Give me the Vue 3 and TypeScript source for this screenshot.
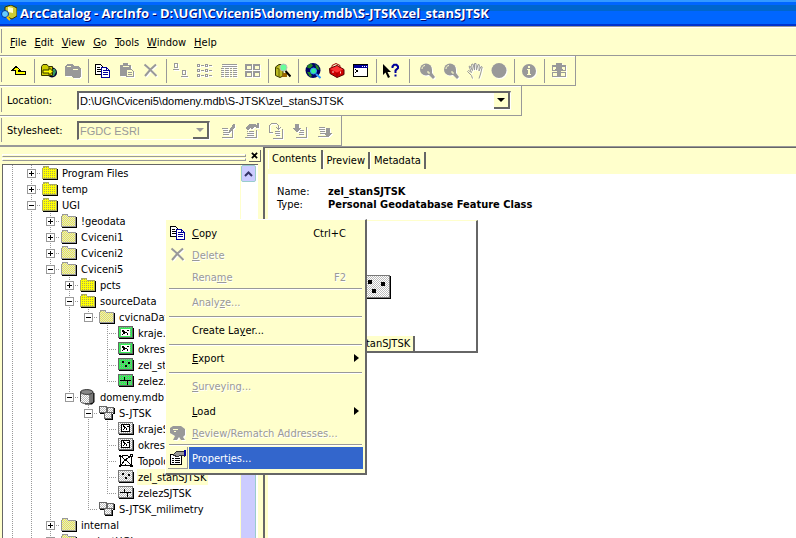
<script setup lang="ts">
import { ref } from 'vue'

interface Tool { icon: string; label: string; off?: boolean }
interface TreeRow {
  lines: boolean[]
  join: 'plus' | 'minus' | 'leaf'
  last?: boolean
  icon: string
  text: string
  selected?: boolean
}
interface MenuRow {
  icon?: string
  parts: [string, string, string]
  keys?: string
  off?: boolean
  sub?: boolean
  active?: boolean
  room?: boolean
  rule?: boolean
}

const menus: [string, string][] = [
  ['F', 'ile'], ['E', 'dit'], ['V', 'iew'], ['G', 'o'], ['T', 'ools'], ['W', 'indow'], ['H', 'elp'],
]

const mainTools: Tool[][] = [
  [{ icon: 'up', label: 'Up one level' }],
  [{ icon: 'connect', label: 'Connect to folder' }, { icon: 'disconnect', label: 'Disconnect folder', off: true }],
  [
    { icon: 'copy', label: 'Copy' },
    { icon: 'paste', label: 'Paste', off: true },
    { icon: 'cross', label: 'Delete', off: true },
  ],
  [
    { icon: 'large', label: 'Large icons', off: true },
    { icon: 'list', label: 'List', off: true },
    { icon: 'details', label: 'Details', off: true },
    { icon: 'thumbs', label: 'Thumbnails', off: true },
  ],
  [{ icon: 'search', label: 'Search' }],
  [
    { icon: 'globe', label: 'Launch ArcMap' },
    { icon: 'toolbox', label: 'ArcToolbox' },
    { icon: 'console', label: 'Command line' },
  ],
  [{ icon: 'help', label: "What's this?" }],
]

const geoTools: Tool[][] = [
  [
    { icon: 'zoom', label: 'Zoom in', off: true },
    { icon: 'zoom', label: 'Zoom out', off: true },
    { icon: 'hand', label: 'Pan', off: true },
    { icon: 'disc', label: 'Full extent', off: true },
  ],
  [{ icon: 'info', label: 'Identify', off: true }],
  [{ icon: 'thumbnail', label: 'Create thumbnail', off: true }],
]

const metaTools: Tool[] = [
  { icon: 'edit', label: 'Edit metadata', off: true },
  { icon: 'props', label: 'Metadata properties', off: true },
  { icon: 'refresh', label: 'Create metadata', off: true },
  { icon: 'import', label: 'Import metadata', off: true },
  { icon: 'export', label: 'Export metadata', off: true },
]

const y = true
const n = false
const rows: TreeRow[] = [
  { lines: [y], join: 'plus', icon: 'folder', text: 'Program Files' },
  { lines: [y], join: 'plus', icon: 'folder', text: 'temp' },
  { lines: [y], join: 'minus', icon: 'folder', text: 'UGI' },
  { lines: [y, y], join: 'plus', icon: 'folder-pale', text: '!geodata' },
  { lines: [y, y], join: 'plus', icon: 'folder-pale', text: 'Cviceni1' },
  { lines: [y, y], join: 'plus', icon: 'folder-pale', text: 'Cviceni2' },
  { lines: [y, y], join: 'minus', icon: 'folder-pale', text: 'Cviceni5' },
  { lines: [y, y, y], join: 'plus', icon: 'folder', text: 'pcts' },
  { lines: [y, y, y], join: 'minus', icon: 'folder', text: 'sourceData' },
  { lines: [y, y, y, y], join: 'minus', last: true, icon: 'folder-pale', text: 'cvicnaData' },
  { lines: [y, y, y, y, n], join: 'leaf', icon: 'poly-green', text: 'kraje.shp' },
  { lines: [y, y, y, y, n], join: 'leaf', icon: 'poly-green', text: 'okresy.shp' },
  { lines: [y, y, y, y, n], join: 'leaf', icon: 'point-green', text: 'zel_st.shp' },
  { lines: [y, y, y, y, n], join: 'leaf', last: true, icon: 'line-green', text: 'zelez.shp' },
  { lines: [y, y, y], join: 'minus', last: true, icon: 'database', text: 'domeny.mdb' },
  { lines: [y, y, y, n], join: 'minus', icon: 'dataset', text: 'S-JTSK' },
  { lines: [y, y, y, n, y], join: 'leaf', icon: 'poly-gray', text: 'krajeSJTSK' },
  { lines: [y, y, y, n, y], join: 'leaf', icon: 'poly-gray', text: 'okresSJTSK' },
  { lines: [y, y, y, n, y], join: 'leaf', icon: 'topology', text: 'Topology' },
  { lines: [y, y, y, n, y], join: 'leaf', icon: 'point-gray', text: 'zel_stanSJTSK', selected: true },
  { lines: [y, y, y, n, y], join: 'leaf', last: true, icon: 'line-gray', text: 'zelezSJTSK' },
  { lines: [y, y, y, n], join: 'leaf', last: true, icon: 'dataset', text: 'S-JTSK_milimetry' },
  { lines: [y, y], join: 'plus', icon: 'folder-pale', text: 'internal' },
  { lines: [y, y], join: 'plus', icon: 'folder-pale', text: 'projectUGI' },
]

const context: MenuRow[] = [
  { icon: 'copy', parts: ['', 'C', 'opy'], keys: 'Ctrl+C' },
  { icon: 'cross', parts: ['', 'D', 'elete'], off: true },
  { parts: ['Rena', 'm', 'e'], keys: 'F2', off: true, rule: true },
  { parts: ['Analy', 'z', 'e...'], off: true, room: true, rule: true },
  { parts: ['Create La', 'y', 'er...'], room: true, rule: true },
  { parts: ['', 'E', 'xport'], sub: true, room: true, rule: true },
  { parts: ['', 'S', 'urveying...'], off: true, room: true },
  { parts: ['', 'L', 'oad'], sub: true },
  { icon: 'mailbox', parts: ['', 'R', 'eview/Rematch Addresses...'], off: true, rule: true },
  { icon: 'sheet', parts: ['Propert', 'i', 'es...'], active: true },
]

const location = ref('D:\\UGI\\Cviceni5\\domeny.mdb\\S-JTSK\\zel_stanSJTSK')
const tabs = ['Contents', 'Preview', 'Metadata']
const tab = ref('Contents')
</script>

<template>
  <div class="app">
    <svg class="defs" aria-hidden="true">
      <defs>
        <pattern id="d-yellow" width="2" height="2" patternUnits="userSpaceOnUse"><rect width="2" height="2" fill="#ff0" /><rect width="1" height="1" fill="#aa5" /></pattern>
        <pattern id="d-pale" width="2" height="2" patternUnits="userSpaceOnUse"><rect width="2" height="2" fill="#ddd" /><path d="M0 0h1v1h-1zM1 1h1v1h-1z" fill="#ee4" /></pattern>
        <pattern id="d-green" width="2" height="2" patternUnits="userSpaceOnUse"><rect width="2" height="2" fill="#3e5" /><rect width="1" height="1" fill="#999" /></pattern>
        <pattern id="d-gray" width="2" height="2" patternUnits="userSpaceOnUse"><rect width="2" height="2" fill="#fff" /><path d="M0 0h1v1h-1zM1 1h1v1h-1z" fill="#bbb" /></pattern>

        <symbol id="i-up" viewBox="0 0 16 16"><path d="M5 3.500L1.500 7H4v4.500h10.500v-3H7.500V7H9z" fill="#ff0" stroke="#000" /></symbol>
        <symbol id="i-connect" viewBox="0 0 16 16" shape-rendering="auto">
          <circle cx="11" cy="9.500" r="5" fill="#003" /><path d="M10 6h4l1 3-2 4h-3l2-3z" fill="#396" />
          <path d="M.5 12.500v-9l1.500-2h4l1.500 2h4v9z" fill="#cc0" stroke="#330" /><path d="M2 7h6V4.500L12 8.500 8 12.500V10H2z" fill="#ff0" stroke="#330" />
        </symbol>
        <symbol id="i-disconnect" viewBox="0 0 16 16"><path d="M0 3l2-2h5l2 2h4l3 3v7l-2 2H8l-2-2H0z" fill="#999" /><path d="M2 3.500h4M8 6.500h5" stroke="#ffc" /></symbol>
        <symbol id="i-copy" viewBox="0 0 16 16">
          <path d="M.5 1.500h5l3 3v7h-8z" fill="#fff" stroke="#000" /><path d="M2 4.500h3M2 6.500h4M2 8.500h4" stroke="#000" />
          <path d="M6.500 4.500h5l3 3v7h-8z" fill="#fff" stroke="#009" /><path d="M8 7.500h3M8 9.500h5M8 11.500h5M11.500 5v2.500h3" stroke="#009" fill="none" />
        </symbol>
        <symbol id="i-paste" viewBox="0 0 16 16"><path d="M1 2h3V0h5v2h3v4H7v7H1z" fill="#999" /><path d="M3.500 3.500h6" stroke="#ffc" /><path d="M7.500 6.500h5l2 2v5h-7z" fill="#ffc" stroke="#999" /><path d="M9 9.500h4M9 11.500h4" stroke="#999" /></symbol>
        <symbol id="i-cross" viewBox="0 0 16 16" shape-rendering="auto"><path d="M1.500 1.500l4 3.500 8 8M13 1.500L7.500 6.500 2 13" stroke="#999" stroke-width="2" fill="none" /></symbol>
        <symbol id="i-large" viewBox="0 0 16 16"><path d="M1.500.500h3v4h-3zM9.500 7.500h3v4h-3zM0 6.500h6M8 13.500h7" stroke="#999" fill="none" /></symbol>
        <symbol id="i-list" viewBox="0 0 16 16"><path d="M.5 1.500h2v2h-2zM8.500 1.500h2v2h-2zM.5 6.500h2v2h-2zM8.500 6.500h2v2h-2zM.5 11.500h2v2h-2zM8.500 11.500h2v2h-2zM4 2.500h3M12 2.500h3M4 7.500h3M12 7.500h3M4 12.500h3M12 12.500h3" stroke="#999" fill="none" /></symbol>
        <symbol id="i-details" viewBox="0 0 16 16"><path d="M1 1.500h15M1 3.500h15" stroke="#999" /><path d="M0 5.500h3m1 0h4m1 0h2m1 0h4M0 7.500h3m1 0h4m1 0h2m1 0h4M0 9.500h3m1 0h4m1 0h2m1 0h4M0 11.500h3m1 0h4m1 0h2m1 0h4M0 13.500h3m1 0h4m1 0h2m1 0h4" stroke="#999" /></symbol>
        <symbol id="i-thumbs" viewBox="0 0 16 16"><path d="M0 1h7v6H0zM8 1h7v6H8zM0 8h7v6H0zM8 8h7v6H8z" fill="#999" /><path d="M2 3h4v3H2zM10 3h4v3h-4zM2 10h4v3H2zM10 10h4v3h-4z" fill="#ffc" /></symbol>
        <symbol id="i-search" viewBox="0 0 16 16" shape-rendering="auto">
          <path d="M.5 4L4 1.500h4V13l-3 1.500L.5 12.500z" fill="#bb2" stroke="#330" /><path d="M.5 4.500L4 6v8" stroke="#660" fill="none" /><path d="M8 10h4v4H7z" fill="#960" />
          <circle cx="8.500" cy="4.500" r="3.500" fill="#6f9" stroke="#bbb" /><path d="M10.500 8l5 5.500" stroke="#000" stroke-width="2" />
        </symbol>
        <symbol id="i-globe" viewBox="0 0 16 16" shape-rendering="auto">
          <circle cx="8" cy="7.500" r="7.500" fill="#006" /><path d="M3 2l3-1.500 2 2-3 3-3-1zM10 1l3 2 1.500 4-3-1zM2 9h3l2 4-2 1z" fill="#282" />
          <circle cx="8.500" cy="8" r="3" fill="#3e9" stroke="#39f" /><path d="M11 11l4.500 4" stroke="#39f" stroke-width="2" />
        </symbol>
        <symbol id="i-toolbox" viewBox="0 0 16 16" shape-rendering="auto"><path d="M.5 5.500L8 2.500l7 4v5L8 14.500l-7-4z" fill="#c00" stroke="#500" /><path d="M1 6l7-3 6 3.500-6 3z" fill="#f33" /><path d="M8 10v4M3 5V2.500L7 .5l4 2V5" fill="none" stroke="#900" /><path d="M4 8v2M11.500 8.500v2" stroke="#fcc" /></symbol>
        <symbol id="i-console" viewBox="0 0 16 16"><path d="M.5 1.500h14v12H.5z" fill="#fff" stroke="#000" /><path d="M1 2h14v3H1z" fill="#009" /><path d="M9 3h1v1H9zM11 3h1v1h-1zM13 3h1v1h-1z" fill="#fff" /><path d="M2.500 6.500l2 1.500-2 1.500" stroke="#000" fill="none" /></symbol>
        <symbol id="i-help" viewBox="0 0 16 16" shape-rendering="auto"><path d="M0 1v11l2.500-2.500L5 15l2-1-2.500-5H8z" fill="#000" /><path d="M9.500 5V3.500L11 1.800h2.500L15 3.500V5l-2.500 2.500V10M12.500 11.500v2" stroke="#009" stroke-width="2" fill="none" /></symbol>
        <symbol id="i-zoom" viewBox="0 0 16 16" shape-rendering="auto"><circle cx="7" cy="6.500" r="6" fill="#999" /><path d="M9 7h4v3l3 4-2 2-4-4H8z" fill="#999" /><path d="M3 6c0-2 1-3 3-3.500M9 8v2h2" stroke="#ffc" fill="none" /></symbol>
        <symbol id="i-hand" viewBox="0 0 16 16" shape-rendering="auto"><path d="M5.500 15.500l-1-3L.5 8.500 1.500 7.500l3 2L2 3.500 3 3l2.500 4.500-1-6L6 1l1.500 6V.5H9L9.500 7 11 1.500l1.300.3L12 8l2-4.500 1.200.5L13.500 11 12 15.500" fill="none" stroke="#999" /></symbol>
        <symbol id="i-disc" viewBox="0 0 16 16" shape-rendering="auto"><circle cx="8" cy="7.500" r="7.500" fill="#999" /></symbol>
        <symbol id="i-info" viewBox="0 0 16 16" shape-rendering="auto"><circle cx="8" cy="8" r="7" fill="#999" /><path d="M7 3h2v2H7zM6 6h3v5h1v1H6v-1h1V7H6z" fill="#ffc" /></symbol>
        <symbol id="i-thumbnail" viewBox="0 0 16 16"><path d="M1 2h14v12H1z" fill="#999" /><path d="M2 4h4v3H2zM10 4h4v3h-4zM2 10h4v3H2zM10 10h4v3h-4z" fill="#ffc" /><path d="M1 8h14v1H1z" fill="#ffc" /><path d="M5 0h6v6h1l-4 5-4-5h1z" fill="#999" /></symbol>
        <symbol id="i-edit" viewBox="0 0 16 16"><path d="M2 5.500h6M3 7.500h5M3 9.500h5M3 11.500h6M2 14.500h10.500V7" stroke="#999" fill="none" /><path d="M13 1h2v3L9 11l-1-1z" fill="#999" /></symbol>
        <symbol id="i-props" viewBox="0 0 16 16"><path d="M1 5l4-4h6l2 1v3l-3-1-2 2-2-1-2 2zM13 0h2v5h-2z" fill="#999" /><path d="M3 8.500h1M5 8.500h5M3 10.500h7M3 12.500h7M1 14.500h11.500V7" stroke="#999" fill="none" /></symbol>
        <symbol id="i-refresh" viewBox="0 0 16 16"><path d="M4.500 9.500h-3v-7l2-2h5l2 2v3M8 4l2.500 2L13 4M7 8.500h5M7 10.500h5M8 12.500h4M5 15.500h9.500V6" stroke="#999" fill="none" /></symbol>
        <symbol id="i-import" viewBox="0 0 16 16"><path d="M3 1h4v4h3L5 9 0 5h3z" fill="#999" /><path d="M8 7.500h4M7 9.500h5M7 11.500h5M4 14.500h10.500V4" stroke="#999" fill="none" /></symbol>
        <symbol id="i-export" viewBox="0 0 16 16"><path d="M3 4.500h6M3 6.500h6M4 8.500h5M4 10.500h5M2 13.500h9" stroke="#999" fill="none" /><path d="M10 5h4v5h2l-4 5-4-5h2z" fill="#999" /></symbol>

        <symbol id="i-folder" viewBox="0 0 16 16"><path d="M1 14.500h14.500V4" stroke="#000" fill="none" /><path d="M.5 13.500v-10l1.500-2h4l1.500 2h7v10z" fill="url(#d-yellow)" stroke="#aa6" /></symbol>
        <symbol id="i-folder-pale" viewBox="0 0 16 16"><path d="M1 14.500h14.500V4" stroke="#000" fill="none" /><path d="M.5 13.500v-10l1.500-2h4l1.500 2h7v10z" fill="url(#d-pale)" stroke="#999" /></symbol>
        <symbol id="i-poly-green" viewBox="0 0 16 16"><path d="M1 14h15V3H1z" fill="#000" /><path d="M.5 1.500h14v11H.5z" fill="url(#d-green)" stroke="#666" /><path d="M3 4h9v7H3z" fill="#fff" /><path d="M4 5h2v1h1v1h2v1H7v1H5v1H4V9h1V7H4zM9 5h2v1H9zM9 8h1v2H9z" fill="#000" /></symbol>
        <symbol id="i-point-green" viewBox="0 0 16 16"><path d="M1 14h15V3H1z" fill="#000" /><path d="M.5 1.500h14v11H.5z" fill="url(#d-green)" stroke="#666" /><path d="M4 4h2v2H4zM10 5h2v2h-2zM7 8h2v2H7z" fill="#000" /></symbol>
        <symbol id="i-line-green" viewBox="0 0 16 16"><path d="M1 14h15V3H1z" fill="#000" /><path d="M.5 1.500h14v11H.5z" fill="url(#d-green)" stroke="#666" /><path d="M2 7.500h11M6.500 4v4M9.500 8v4" stroke="#000" /></symbol>
        <symbol id="i-poly-gray" viewBox="0 0 16 16"><path d="M1 14h15V3H1z" fill="#000" /><path d="M.5 1.500h14v11H.5z" fill="url(#d-gray)" stroke="#777" /><path d="M3.500 3.500h8v7h-8z" fill="#fff" stroke="#000" /><path d="M5 4h1v1h1v1h1v1H7v1H6v1H5V8h1V6H5zM9 5h2v1H9zM8 7h1v2H8z" fill="#000" /></symbol>
        <symbol id="i-point-gray" viewBox="0 0 16 16"><path d="M1 14h15V3H1z" fill="#000" /><path d="M.5 1.500h14v11H.5z" fill="url(#d-gray)" stroke="#777" /><path d="M4 4h2v2H4zM10 5h2v2h-2zM7 8h2v2H7z" fill="#000" /></symbol>
        <symbol id="i-line-gray" viewBox="0 0 16 16"><path d="M1 14h15V3H1z" fill="#000" /><path d="M.5 1.500h14v11H.5z" fill="url(#d-gray)" stroke="#777" /><path d="M2 7.500h11M6.500 4v4M9.500 8v4" stroke="#000" /></symbol>
        <symbol id="i-topology" viewBox="0 0 16 16"><path d="M2 3.500l5-1 6 1M2.500 3v10l5-1 6 1V3M3 3l4 4 6-4M7 7l-4 5M8 7l5 5" stroke="#000" fill="none" /><path d="M1 2h2v2H1zM12 1h3v3h-3zM1 12h2v2H1zM12 12h3v2h-3zM6 6h2v2H6z" fill="#000" /><path d="M13 2h1v1h-1z" fill="#fff" /></symbol>
        <symbol id="i-database" viewBox="0 0 16 16" shape-rendering="auto"><path d="M2 4h12.500v9L12 15.500H5z" fill="#000" /><path d="M.5 3v9.500C1 14 4 14.500 6.500 14.500s6-.5 6.500-2V3z" fill="url(#d-gray)" stroke="#444" /><path d="M9 5l4-1v9l-4 1.500z" fill="#777" /><ellipse cx="6.800" cy="3" rx="6.200" ry="2.400" fill="#888" stroke="#333" /></symbol>
        <symbol id="i-dataset" viewBox="0 0 16 16"><path d="M1 8h7V2h1v7H1zM9 9h7V3h-1v5H9zM6 14h7V8h1v7H6z" fill="#000" /><path d="M.5 1.500h7v6h-7zM8.500 2.500h6v5h-6zM5.500 7.500h7v6h-7z" fill="url(#d-gray)" stroke="#666" /></symbol>
        <symbol id="i-mailbox" viewBox="0 0 16 16" shape-rendering="auto"><path d="M0 3l3-2h8l4 3v6l-2 2 2 3h-4l-2-3-2 3H3l2-4-5-3z" fill="#999" /><path d="M3 4.500h5M4 6.500h2" stroke="#ffc" /></symbol>
        <symbol id="i-sheet" viewBox="0 0 16 16"><path d="M.5 4.500h11v10H.5z" fill="#fff" stroke="#000" /><path d="M2 8.500h2M5 8.500h5M2 10.500h2M5 10.500h5M2 12.500h2M5 12.500h5" stroke="#000" /><path d="M3 5l4-4h5l2 1v4l-4-1-2 2z" fill="#999" stroke="#333" /><path d="M14 0h2v6h-2z" fill="#009" /></symbol>
        <symbol id="i-app" viewBox="0 0 16 16" shape-rendering="auto"><path d="M4 2l6-2 6 3v8l-5 3-7-3z" fill="#cc3" stroke="#330" /><path d="M7 2l5 1v5l-5-1z" fill="#ffc" /><circle cx="4" cy="9" r="3.500" fill="#6cf" stroke="#039" /><path d="M6 12l3 3" stroke="#fc0" stroke-width="2" /></symbol>
      </defs>
    </svg>

    <header class="title">
      <svg class="ico"><use href="#i-app" /></svg>
      <h1>ArcCatalog - ArcInfo - D:\UGI\Cviceni5\domeny.mdb\S-JTSK\zel_stanSJTSK</h1>
    </header>

    <nav class="menubar">
      <button v-for="m in menus" :key="m[0]" type="button"><u>{{ m[0] }}</u>{{ m[1] }}</button>
    </nav>

    <div class="strip tools">
      <div class="band main">
        <div v-for="(group, g) in mainTools" :key="g" class="group">
          <button v-for="t in group" :key="t.label" type="button" :aria-label="t.label" :disabled="t.off">
            <svg class="ico"><use :href="'#i-' + t.icon" /></svg>
          </button>
        </div>
      </div>
      <div class="band geo">
        <div v-for="(group, g) in geoTools" :key="g" class="group">
          <button v-for="t in group" :key="t.label" type="button" :aria-label="t.label" :disabled="t.off">
            <svg class="ico"><use :href="'#i-' + t.icon" /></svg>
          </button>
        </div>
      </div>
    </div>

    <div class="strip place">
      <label for="location">Location:</label>
      <div class="combo wide">
        <input id="location" v-model="location" type="text" />
        <button type="button" aria-label="Recent locations"></button>
      </div>
    </div>

    <div class="strip style">
      <label for="sheet">Stylesheet:</label>
      <div class="combo off">
        <select id="sheet" disabled><option>FGDC ESRI</option></select>
        <span class="drop"></span>
      </div>
      <div class="group">
        <button v-for="t in metaTools" :key="t.label" type="button" :aria-label="t.label" :disabled="t.off">
          <svg class="ico"><use :href="'#i-' + t.icon" /></svg>
        </button>
      </div>
    </div>

    <div class="work">
      <aside class="side">
        <div class="grip">
          <div class="bars"><i></i><i></i></div>
          <button type="button" class="close" aria-label="Close"><svg viewBox="0 0 8 8"><path d="M1 1l6 6M7 1L1 7" stroke="#000" stroke-width="2" /></svg></button>
        </div>
        <div class="tree-box">
          <ul class="tree">
            <li v-for="row in rows" :key="row.text">
              <span v-for="(on, k) in row.lines" :key="k" class="cell" :class="{ line: on }"></span>
              <span class="cell line joint" :class="{ last: row.last }">
                <button v-if="row.join !== 'leaf'" type="button" class="box" :class="row.join" :aria-label="row.text"></button>
              </span>
              <svg class="ico"><use :href="'#i-' + row.icon" /></svg>
              <span class="name" :class="{ selected: row.selected }">{{ row.text }}</span>
            </li>
          </ul>
          <div class="scroll">
            <button type="button" aria-label="Scroll up"><svg viewBox="0 0 9 6"><path d="M1 5l3.500-3.500L8 5" fill="none" stroke="#336" stroke-width="2" /></svg></button>
            <div class="thumb"></div>
          </div>
        </div>
      </aside>

      <main class="pane">
        <div class="tabs" role="tablist">
          <button v-for="t in tabs" :key="t" type="button" role="tab" :class="{ on: t === tab }" @click="tab = t">{{ t }}</button>
        </div>
        <section class="sheet">
          <dl>
            <dt>Name:</dt><dd>zel_stanSJTSK</dd>
            <dt>Type:</dt><dd>Personal Geodatabase Feature Class</dd>
          </dl>
          <figure>
            <svg class="big" viewBox="0 0 28 24"><path d="M1 24h27V1H1z" fill="#000" /><path d="M.5.500h26v22H.5z" fill="url(#d-gray)" stroke="#777" /><path d="M5 5h4v4H5zM18 7h4v4h-4zM9 14h4v4H9z" fill="#000" /></svg>
            <figcaption>zel_stanSJTSK</figcaption>
          </figure>
        </section>
      </main>
    </div>

    <div class="context" role="menu">
      <template v-for="item in context" :key="item.parts.join('')">
        <button type="button" role="menuitem" :disabled="item.off" :class="{ active: item.active, room: item.room }">
          <span class="slot"><svg v-if="item.icon" class="ico"><use :href="'#i-' + item.icon" /></svg></span>
          <span class="text">{{ item.parts[0] }}<u>{{ item.parts[1] }}</u>{{ item.parts[2] }}</span>
          <span v-if="item.keys" class="keys">{{ item.keys }}</span>
          <span v-if="item.sub" class="arrow"></span>
        </button>
        <hr v-if="item.rule" />
      </template>
    </div>
  </div>
</template>

<style>
body {
  background: #ffc;
}
</style>

<style scoped>
.app {
  position: relative;
  display: flex;
  flex-direction: column;
  height: 100vh;
  overflow: hidden;
  background: #ffc;
  color: #000;
  font: 11px/16px "DejaVu Sans Condensed", "DejaVu Sans", sans-serif;
}
.app *,
.app *::before,
.app *::after {
  box-sizing: border-box;
}
.defs {
  position: absolute;
  width: 0;
  height: 0;
}
button,
input,
select {
  margin: 0;
  padding: 0;
  border: 0;
  border-radius: 0;
  background: none;
  color: inherit;
  font: inherit;
}
.ico {
  display: block;
  flex: none;
  width: 16px;
  height: 16px;
  shape-rendering: crispEdges;
}
button:disabled .ico {
  filter: drop-shadow(1px 1px 0 #fff);
}
.title {
  display: flex;
  flex: none;
  align-items: center;
  gap: 3px;
  height: 26px;
  padding-left: 1px;
  background: linear-gradient(#39f 2px, #06f 2px 5px, #06c 5px 11px, #06f 11px 24px, #03c 24px);
}
h1 {
  margin: 0;
  color: #fff;
  font: bold 13px/26px "Open Sans", sans-serif;
  text-shadow: 1px 1px 0 #006;
  white-space: nowrap;
}
.menubar {
  display: flex;
  flex: none;
  gap: 8px;
  height: 30px;
  padding: 3px 10px 0;
  border-top: 1px solid #999;
  border-bottom: 1px solid #999;
  box-shadow: inset 0 1px #fff;
}
.strip {
  display: flex;
  flex: none;
  align-items: center;
  align-self: flex-start;
  height: 30px;
  border-right: 1px solid #999;
  border-bottom: 1px solid #999;
  box-shadow: inset 0 1px #fff;
}
.menubar,
.strip {
  background: linear-gradient(#999, #999) 1px 2px / 1px 24px no-repeat;
}
.band {
  display: flex;
}
.group {
  display: flex;
}
.group button {
  display: grid;
  place-items: center;
  width: 24px;
  height: 24px;
}
.band .group + .group {
  padding-left: 6px;
  background: linear-gradient(#999, #999) 3px 0 / 1px 100% no-repeat;
}
.band.main {
  padding: 0 5px 0 7px;
}
.band.geo {
  padding: 0 4px 0 5px;
  margin-left: 1px;
  border-left: 1px solid #999;
}
.place label,
.style label {
  width: 70px;
  margin-left: 7px;
}
.combo {
  display: flex;
  width: 133px;
  height: 19px;
  border: 2px solid #666;
  border-right: 1px solid #fff;
  border-bottom: 1px solid #fff;
  font: 11px/16px "Liberation Sans", sans-serif;
}
.combo.wide {
  width: 434px;
  margin-right: 10px;
  background: #fff;
}
.combo input,
.combo select {
  flex: 1;
  min-width: 0;
  padding: 0 1px;
  appearance: none;
  outline: 0;
}
.combo button,
.drop {
  display: grid;
  place-items: center;
  width: 16px;
  border-right: 2px solid #666;
  border-bottom: 2px solid #666;
  background: #ffc;
}
.combo button::after,
.drop::after {
  border: 4px solid transparent;
  border-top-color: #000;
  border-bottom: 0;
  content: "";
}
.combo.off {
  color: #999;
}
.combo.off select {
  color: #999;
  opacity: 1;
}
.drop::after {
  border-top-color: #999;
}
.style .group {
  padding: 0 5px 0 6px;
}
.work {
  display: flex;
  flex: 1;
  min-height: 0;
  border-top: 1px solid #999;
}
.side {
  display: flex;
  flex: none;
  flex-direction: column;
  width: 263px;
  padding: 3px 5px 0 2px;
}
.grip {
  display: flex;
  gap: 3px;
  height: 14px;
  margin-right: -3px;
}
.bars {
  display: grid;
  flex: 1;
  gap: 1px;
  align-content: center;
}
.bars i {
  height: 3px;
  border: 1px solid #999;
  border-top-color: #fff;
  border-left-color: #fff;
}
.close {
  width: 12px;
  height: 12px;
  padding: 2px;
  border-right: 1px solid #666;
  border-bottom: 1px solid #666;
}
.close svg {
  display: block;
}
.tree-box {
  display: flex;
  flex: 1;
  min-height: 0;
  border-top: 1px solid #666;
  border-left: 1px solid #666;
  background: #fff;
}
.tree {
  flex: 1;
  min-width: 0;
  margin: 0;
  padding: 0;
  overflow: hidden;
  list-style: none;
}
.tree li {
  display: flex;
  height: 16px;
  white-space: nowrap;
}
.cell {
  position: relative;
  flex: none;
  width: 19px;
}
.cell.line::before {
  position: absolute;
  top: 0;
  bottom: 0;
  left: 9px;
  width: 1px;
  background: repeating-linear-gradient(#999 0 1px, #fff 1px 2px);
  content: "";
}
.cell.last::before {
  bottom: 8px;
}
.joint::after {
  position: absolute;
  top: 8px;
  right: 0;
  left: 9px;
  height: 1px;
  background: repeating-linear-gradient(90deg, #999 0 1px, #fff 1px 2px);
  content: "";
}
.box {
  position: absolute;
  z-index: 1;
  top: 4px;
  left: 5px;
  width: 9px;
  height: 9px;
  border: 1px solid #999;
  background: linear-gradient(#000, #000) center / 5px 1px no-repeat, #fff;
}
.box.plus {
  background: linear-gradient(#000, #000) center / 5px 1px no-repeat, linear-gradient(#000, #000) center / 1px 5px no-repeat, #fff;
}
.tree .ico {
  margin-left: 1px;
}
.name {
  margin-left: 3px;
  padding: 1px 2px 0 1px;
  line-height: 15px;
}
.name.selected {
  background: #ffc;
}
.scroll {
  display: flex;
  flex: none;
  flex-direction: column;
  justify-content: space-between;
  width: 18px;
  padding-right: 2px;
  border-left: 1px solid #ffc;
}
.scroll button {
  display: grid;
  place-items: center;
  height: 17px;
  border: 1px solid #9cc;
  border-radius: 2px;
  background: #ccf;
}
.scroll button svg {
  width: 9px;
  height: 6px;
}
.thumb {
  height: 72px;
  border-right: 1px solid #9cc;
  background: #ccf;
}
.pane {
  display: flex;
  flex: 1;
  flex-direction: column;
  min-width: 0;
  padding: 2px 0 0 3px;
  border-top: 1px solid #666;
  border-left: 2px solid #666;
}
.tabs {
  display: flex;
  flex: none;
  align-items: flex-end;
  height: 19px;
}
.tabs button {
  height: 17px;
  padding: 0 3px;
  border-right: 2px solid #666;
  border-left: 1px solid #fff;
}
.tabs .on {
  height: 19px;
  padding: 0 4px 2px 3px;
}
.sheet {
  flex: 1;
  margin-top: 5px;
  padding: 11px 9px;
  background: #fff;
}
dl {
  display: grid;
  grid-template-columns: 51px auto;
  margin: 0 0 9px;
  line-height: 13px;
}
dd {
  margin: 0;
  font-weight: bold;
}
figure {
  display: grid;
  justify-items: center;
  width: 201px;
  height: 133px;
  margin: 0;
  grid-template-rows: 1fr auto;
  border-top: 1px solid #ffc;
  border-left: 1px solid #ffc;
  border-right: 2px solid #666;
  border-bottom: 2px solid #666;
}
.big {
  align-self: end;
  width: 28px;
  height: 24px;
  margin-bottom: 37px;
  shape-rendering: crispEdges;
}
figcaption {
  height: 15px;
  padding: 0 3px;
  border-right: 2px solid #666;
  background: #ffc;
  line-height: 15px;
}
.context {
  position: absolute;
  top: 219px;
  left: 165px;
  width: 202px;
  padding: 2px 2px 4px;
  border: 1px solid #fff;
  border-right: 2px solid #666;
  border-bottom: 2px solid #666;
  background: #ffc;
}
.context button {
  display: flex;
  align-items: center;
  width: 100%;
  height: 22px;
  text-align: left;
}
.context .room {
  margin-bottom: 3px;
}
.slot {
  display: grid;
  place-items: center;
  flex: none;
  width: 20px;
  height: 22px;
}
.text,
.keys {
  padding-top: 2px;
  line-height: 20px;
}
.text {
  flex: 1;
  padding-left: 4px;
  white-space: nowrap;
}
.keys {
  padding-right: 17px;
}
.context button:disabled {
  color: #999;
  text-shadow: 1px 1px 0 #fff;
}
.context .active .slot {
  border-right: 1px solid #999;
  border-bottom: 1px solid #999;
}
.active .text {
  margin-left: 1px;
  padding-left: 3px;
  background: #36c;
  color: #fff;
}
.arrow {
  margin-right: 4px;
  border: 4px solid transparent;
  border-right: 0;
  border-left: 5px solid #000;
}
hr {
  height: 3px;
  margin: 0 1px;
  border: 0;
  background: linear-gradient(#999 1px, #fff 1px 2px, #ffc 2px);
}
</style>
